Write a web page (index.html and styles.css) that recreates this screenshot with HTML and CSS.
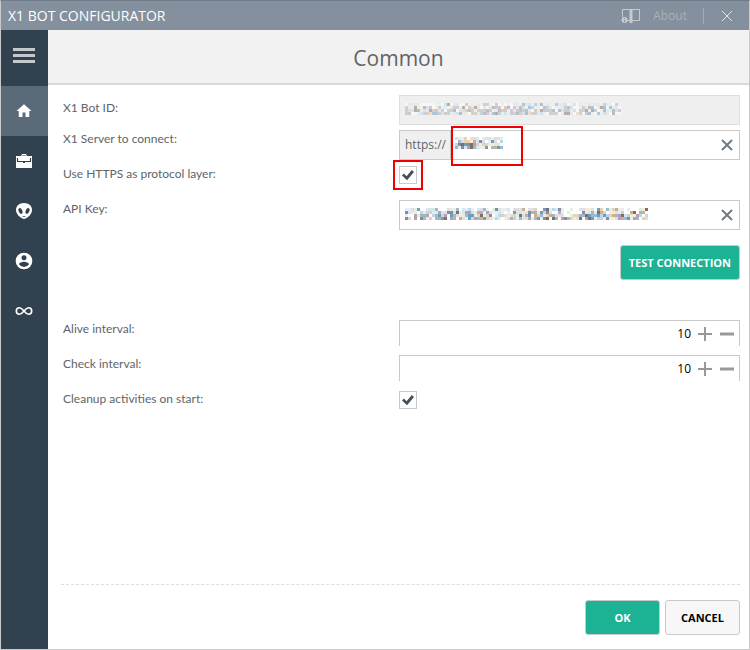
FILE: index.html
```html
<!DOCTYPE html>
<html lang="en">
<head>
  <meta charset="UTF-8">
  <meta name="viewport" content="width=device-width, initial-scale=1">
  <title>X1 Bot Configurator</title>
  <link rel="stylesheet" href="styles.css">
</head>
<body>

<div class="window">
  <header class="titlebar">
    <span class="app-name">X1 BOT CONFIGURATOR</span>
    <button class="about-btn" type="button">
      <svg width="20" height="16" viewBox="0 0 20 16" fill="none" stroke="currentColor">
        <path d="M1.5 9V1.5H9M6 12.5H9M11 1.5H18.5V12.5H11"/>
        <path d="M10 1V15" stroke-width="3"/>
        <circle cx="3.500" cy="12" r="3" fill="currentColor" stroke="none"/>
        <path d="M3.500 10V11M3.500 12V14" stroke="#84909d"/>
      </svg>
      About
    </button>
    <button class="close-btn" type="button" aria-label="Close">
      <svg width="12" height="12" viewBox="0 0 12 12" fill="none" stroke="currentColor"><path d="M1 1L11 11M11 1L1 11"/></svg>
    </button>
  </header>

  <div class="main">
    <nav class="sidebar">
      <button class="menu-btn" type="button" aria-label="Menu">
        <svg width="22" height="15" viewBox="0 0 22 15" fill="currentColor"><path d="M0 0h22v3H0zM0 6h22v3H0zM0 12h22v3H0z"/></svg>
      </button>
      <a class="nav-item active" href="#common" aria-label="Common">
        <svg width="18" height="18" viewBox="0 0 24 24" fill="currentColor"><path d="M10 20v-6h4v6h5v-8h3L12 3 2 12h3v8z"/></svg>
      </a>
      <a class="nav-item" href="#jobs" aria-label="Jobs">
        <svg width="16" height="14" viewBox="0 0 16 14"><path fill="currentColor" d="M5 2L6 0h4l1 2h5v12H0V2zM6 1.500V2h4v-.5z"/><path d="M1.500 4V7.500H14.500V4" fill="none" stroke="#32414f" stroke-width="1.200"/><path d="M7 7h2v2H7z" fill="#32414f"/></svg>
      </a>
      <a class="nav-item" href="#agents" aria-label="Agents">
        <svg width="18" height="18" viewBox="0 0 18 18"><path fill="currentColor" d="M9 1C4 1 1 4 1 8c0 4 4 8 8 9 4-1 8-5 8-9 0-4-3-7-8-7z"/><g fill="#32414f"><ellipse cx="5.500" cy="9" rx="1.800" ry="3" transform="rotate(-24 5.500 9)"/><ellipse cx="12.500" cy="9" rx="1.800" ry="3" transform="rotate(24 12.500 9)"/><path d="M7 14h4l-2 1z"/></g></svg>
      </a>
      <a class="nav-item" href="#account" aria-label="Account">
        <svg width="20" height="20" viewBox="0 0 24 24" fill="currentColor"><path d="M12 2a10 10 0 1 0 0 20 10 10 0 0 0 0-20zm0 3a3 3 0 1 1 0 6 3 3 0 0 1 0-6zm0 14.200a7.200 7.200 0 0 1-6-3.200c0-2 4-3.100 6-3.100s6 1.100 6 3.100a7.200 7.200 0 0 1-6 3.200z"/></svg>
      </a>
      <a class="nav-item" href="#loops" aria-label="Loops">
        <svg width="18" height="10" viewBox="0 0 18 10" fill="none" stroke="currentColor" stroke-width="1.600"><path d="M9 5C7 2.500 6 1.800 4.500 1.800a3.200 3.200 0 0 0 0 6.400C6 8.200 7 7.500 9 5s3-3.200 4.500-3.200a3.200 3.200 0 0 1 0 6.400C12 8.200 11 7.500 9 5z"/></svg>
      </a>
    </nav>

    <div class="page">
      <h1 class="page-title">Common</h1>

      <form class="settings">
        <div class="row">
          <label for="botId">X1 Bot ID:</label>
          <div class="field readonly">
            <input id="botId" type="text" readonly>
            <svg class="mosaic" data-columns="72" data-seed="7"></svg>
          </div>
        </div>
        <div class="row">
          <label for="server">X1 Server to connect:</label>
          <div class="field">
            <span class="prefix">https://</span>
            <div class="value marked">
              <input id="server" type="text">
              <svg class="mosaic" data-columns="16" data-seed="3"></svg>
            </div>
            <button class="clear-btn" type="button" aria-label="Clear server"><svg width="12" height="12" viewBox="0 0 12 12"><path d="M1 1L11 11M11 1L1 11"/></svg></button>
          </div>
        </div>
        <div class="row">
          <label for="https">Use HTTPS as protocol layer:</label>
          <span class="check marked"><input id="https" type="checkbox" checked></span>
        </div>
        <div class="row">
          <label for="apiKey">API Key:</label>
          <div class="field">
            <input id="apiKey" type="text">
            <svg class="mosaic" data-columns="81" data-seed="19"></svg>
            <button class="clear-btn" type="button" aria-label="Clear key"><svg width="12" height="12" viewBox="0 0 12 12"><path d="M1 1L11 11M11 1L1 11"/></svg></button>
          </div>
        </div>
        <div class="test-row">
          <button class="btn primary" type="button">TEST CONNECTION</button>
        </div>
        <div class="row">
          <label for="alive">Alive interval:</label>
          <div class="field spinner">
            <input id="alive" type="text" value="10">
            <button type="button" aria-label="Increase"><svg width="14" height="14" viewBox="0 0 14 14"><path d="M0 7H14M7 0V14"/></svg></button>
            <button type="button" aria-label="Decrease"><svg width="14" height="14" viewBox="0 0 14 14"><path d="M0 7H14" stroke-width="3"/></svg></button>
          </div>
        </div>
        <div class="row">
          <label for="check">Check interval:</label>
          <div class="field spinner">
            <input id="check" type="text" value="10">
            <button type="button" aria-label="Increase"><svg width="14" height="14" viewBox="0 0 14 14"><path d="M0 7H14M7 0V14"/></svg></button>
            <button type="button" aria-label="Decrease"><svg width="14" height="14" viewBox="0 0 14 14"><path d="M0 7H14" stroke-width="3"/></svg></button>
          </div>
        </div>
        <div class="row">
          <label for="cleanup">Cleanup activities on start:</label>
          <span class="check"><input id="cleanup" type="checkbox" checked></span>
        </div>
      </form>

      <footer class="actions">
        <button class="btn primary" type="button">OK</button>
        <button class="btn" type="button">CANCEL</button>
      </footer>
    </div>
  </div>
</div>

<script src="script.js"></script>
</body>
</html>
```
FILE: styles.css
```css
:root {
  --bar: #84909d;
  --side: #32414f;
  --side-active: #5b6a79;
  --primary: #1cb394;
  --border: #cacaca;
  --text: #5f6468;
  --mark: #f00000;
  --font: "Open Sans", "Noto Sans", sans-serif;
  --label-font: Lato, "Open Sans", sans-serif;
}

* {
  box-sizing: border-box;
}

body {
  margin: 0;
  color: var(--text);
  font-family: var(--font);
  font-size: 12px;
}

button,
input {
  font-family: inherit;
  font-size: inherit;
}

button {
  background: transparent;
  border: none;
  padding: 0;
  cursor: pointer;
}

svg {
  display: block;
}

.window {
  display: flex;
  flex-direction: column;
  min-height: 100vh;
  border: 1px solid #c8cacc;
  border-top-color: #707c89;
}

.titlebar {
  display: flex;
  align-items: center;
  height: 29px;
  padding: 0 16px 0 7px;
  background: var(--bar);
  color: #fff;
}

.app-name {
  flex: 1;
  font-size: 14px;
}

.about-btn {
  display: flex;
  align-items: center;
  gap: 12px;
  padding-right: 16px;
  border-right: 1px solid #a4adb6;
  color: #a9b1b9;
  line-height: 16px;
}

.about-btn svg {
  color: #c5cbd0;
}

.close-btn {
  margin-left: 17px;
  color: #e0e4e7;
}

.main {
  display: flex;
  flex: 1;
}

.sidebar {
  width: 47px;
  background: var(--side);
}

.menu-btn,
.nav-item {
  display: flex;
  align-items: center;
  justify-content: center;
  width: 100%;
  height: 50px;
  padding-right: 1px;
  color: #fff;
}

.menu-btn {
  height: 56px;
  padding-bottom: 6px;
  color: #c4c9cc;
}

.nav-item.active {
  background: var(--side-active);
}

.page {
  display: flex;
  flex: 1;
  flex-direction: column;
}

.page-title {
  height: 55px;
  margin: 0;
  background: #f2f2f2;
  border-bottom: 2px solid #d8d8d8;
  font-size: 21px;
  font-weight: 400;
  line-height: 56px;
  text-align: center;
}

.settings {
  flex: 1;
  padding: 10px 9px 0 15px;
}

.row {
  display: grid;
  grid-template-columns: 336px 1fr;
  min-height: 30px;
  margin-bottom: 5px;
}

.row label {
  font-family: var(--label-font);
  line-height: 18px;
}

.row:first-child label {
  padding-top: 4px;
}

.field {
  display: flex;
  position: relative;
  height: 30px;
  border: 1px solid var(--border);
}

.field input {
  flex: 1;
  min-width: 0;
  width: 100%;
  padding: 0 5px;
  background: transparent;
  border: none;
  outline: none;
}

.readonly {
  background: #efefef;
  border-color: #dfdfdf;
}

.prefix {
  padding: 0 4px 0 5px;
  background: #efefef;
  border-right: 1px solid var(--border);
  line-height: 28px;
}

.value {
  position: relative;
  width: 68px;
}

.marked {
  outline: 2px solid var(--mark);
}

.value.marked {
  height: 36px;
  margin: -3px auto 0 2px;
}

.mosaic {
  position: absolute;
  top: 7px;
  left: 5px;
  pointer-events: none;
}

.readonly .mosaic {
  opacity: 0.5;
}

.value .mosaic {
  top: 9px;
  left: 2px;
}

.clear-btn {
  width: 24px;
}

.clear-btn svg {
  margin: auto;
  fill: none;
  stroke: #6f7b85;
  stroke-width: 2;
}

.check {
  justify-self: start;
  align-self: start;
  margin-top: 1px;
}

.check.marked {
  outline-offset: 4px;
}

.check input {
  display: block;
  width: 18px;
  height: 18px;
  margin: 0;
  appearance: none;
  border: 1px solid var(--border);
}

.check input::before {
  content: "";
  display: block;
  width: 12px;
  height: 12px;
  margin: 2px;
  background: #454f5c;
  clip-path: polygon(0 55%, 16% 38%, 38% 60%, 82% 8%, 100% 24%, 42% 94%);
}

.check input:not(:checked)::before {
  display: none;
}

.test-row {
  display: flex;
  justify-content: flex-end;
  align-items: flex-start;
  height: 85px;
  padding-top: 10px;
}

.spinner {
  height: 26px;
  padding-right: 1px;
  border-bottom: none;
}

.spinner input {
  padding-right: 3px;
  color: #000;
  text-align: right;
}

.spinner button {
  width: 22px;
}

.spinner svg {
  margin: auto;
  stroke: #999;
  stroke-width: 2;
}

.btn {
  height: 35px;
  min-width: 75px;
  padding: 0 8px;
  background: #f7f7f7;
  border: 1px solid var(--border);
  border-radius: 3px;
  color: #000;
  font-size: 11px;
  font-weight: 700;
}

.btn.primary {
  background: var(--primary);
  color: #fff;
}

.actions {
  display: flex;
  justify-content: flex-end;
  gap: 5px;
  margin: 0 9px 0 13px;
  padding: 15px 0 14px;
  border-top: 1px dashed #ddd;
}
```
FILE: script.js
```js
// Hidden values are shown as coloured blocks
const light = ['#ffffff', '#ffffff', '#e4eff8', '#f8ecd8', '#d5e6f0', '#e6dce0', '#e2f0df'];
const dark = ['#9fb9cf', '#d3ad85', '#7d8fa4', '#bfd6e6', '#806c68', '#b5a0b4', '#6aa0c4', '#e6d2b4', '#a9b4b8'];
const svgNs = 'http://www.w3.org/2000/svg';
const cell = 3;

document.querySelectorAll('.mosaic').forEach((svg) => {
  const columns = Number(svg.dataset.columns);
  let seed = Number(svg.dataset.seed);
  const random = () => {
    seed = (seed * 48271) % 2147483647;
    return seed / 2147483647;
  };
  random();
  svg.setAttribute('width', columns * cell);
  svg.setAttribute('height', 4 * cell);

  for (let i = 0; i < columns * 4; i++) {
    const row = Math.floor(i / columns);
    // the upper row is mostly empty, as above small letters
    const palette = random() < [0.2, 0.45, 0.65, 0.6][row] ? dark : light;
    const rect = document.createElementNS(svgNs, 'rect');
    rect.setAttribute('x', (i % columns) * cell);
    rect.setAttribute('y', row * cell);
    rect.setAttribute('width', cell);
    rect.setAttribute('height', cell);
    rect.setAttribute('fill', palette[Math.floor(random() * palette.length)]);
    svg.appendChild(rect);
  }
});
```
